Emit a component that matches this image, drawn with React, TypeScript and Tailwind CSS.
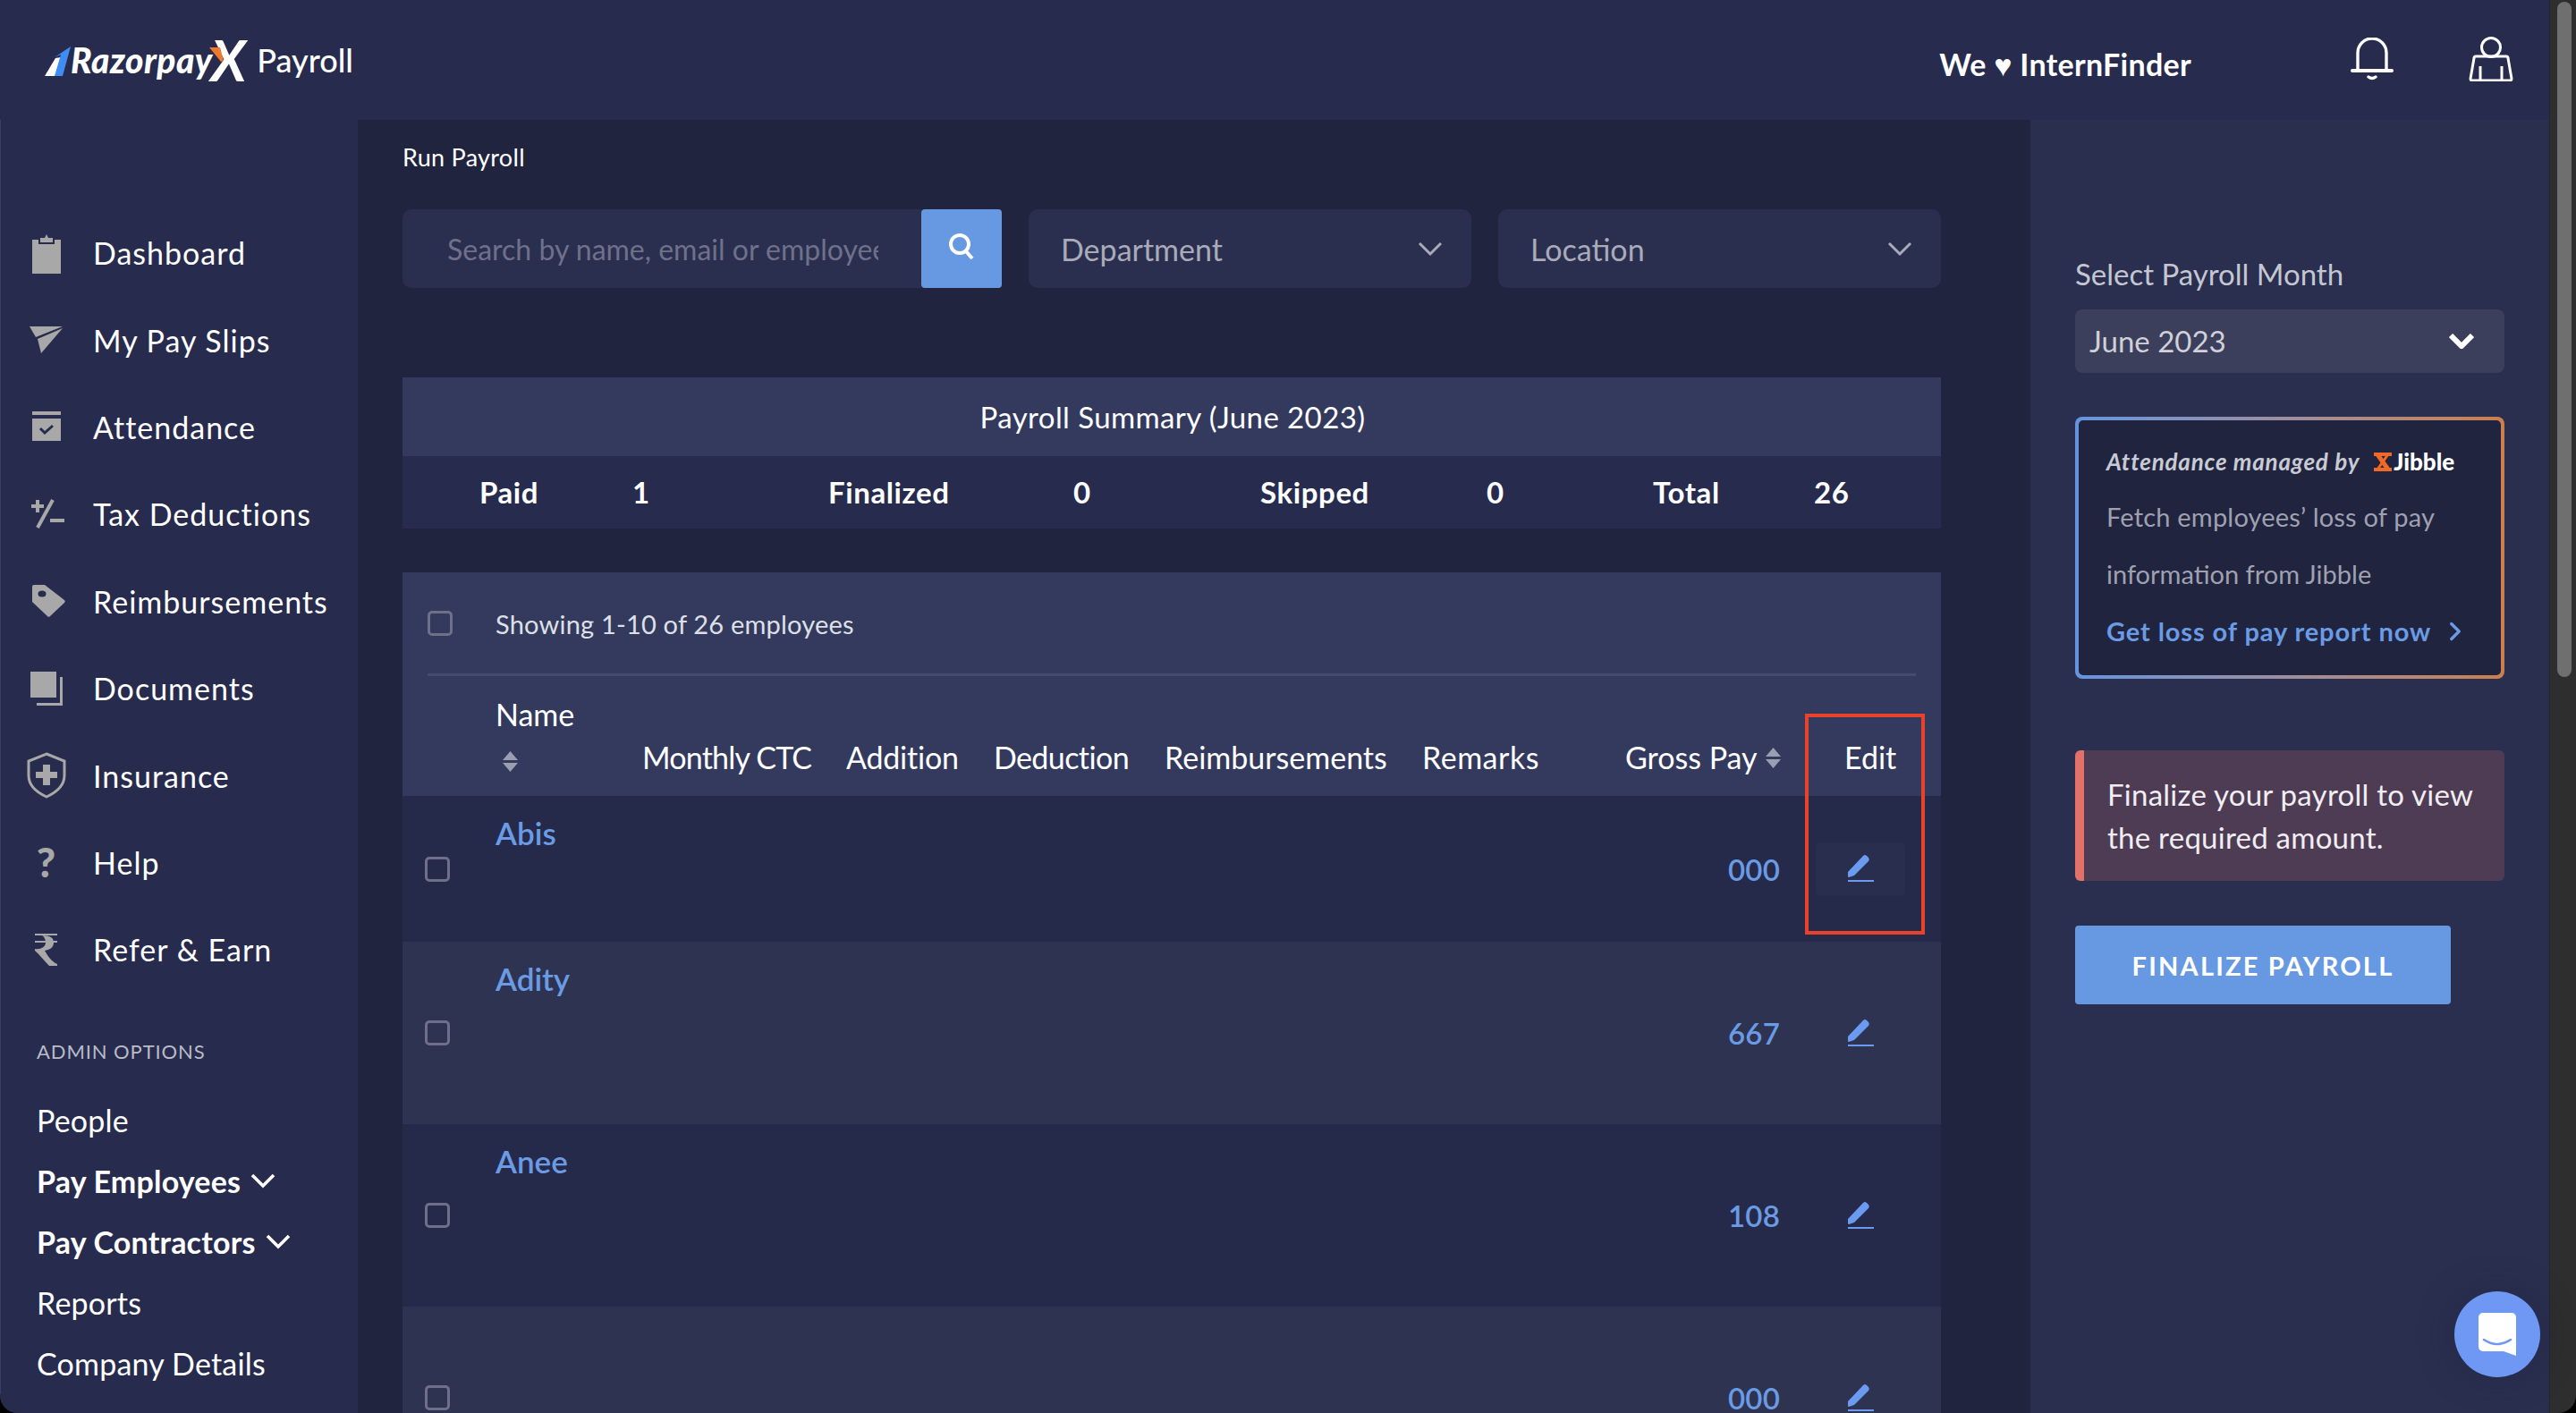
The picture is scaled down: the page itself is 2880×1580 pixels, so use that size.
import { ChevronRight } from "lucide-react";
import type { ReactNode } from "react";

const navItems: { label: string; icon: ReactNode }[] = [
  {
    label: "Dashboard",
    icon: (
      <svg width="44" height="46" viewBox="0 0 44 46" fill="#a8a8a8">
        <path d="M6 8h7v5h18V8h7v38H6z" />
        <path d="M15 11V6h5l2-4 2 4h5v5z" />
      </svg>
    ),
  },
  {
    label: "My Pay Slips",
    icon: (
      <svg width="38" height="31" viewBox="0 0 38 31" fill="#a8a8a8">
        <path d="M0 0h37L7 12z" />
        <path d="M37 2 9 14l4 16z" />
      </svg>
    ),
  },
  {
    label: "Attendance",
    icon: (
      <svg width="44" height="36" viewBox="0 0 44 36" fill="#a8a8a8">
        <path d="M6 1h32v4H6z" />
        <path d="M6 9h32v25H6z" />
        <path d="M15 20l5 5 9-8" fill="none" stroke="#272b4d" strokeWidth="3" />
      </svg>
    ),
  },
  {
    label: "Tax Deductions",
    icon: (
      <svg width="44" height="36" viewBox="0 0 44 36" fill="none" stroke="#a8a8a8" strokeWidth="4">
        <path d="M5 9h14M12 2v14M29 2 12 33M26 25h16" />
      </svg>
    ),
  },
  {
    label: "Reimbursements",
    icon: (
      <svg width="44" height="38" viewBox="0 0 44 38">
        <path fill="#a8a8a8" d="M6 3a2 2 0 0 1 2-2h12l22 17a2 2 0 0 1 0 3L26 36a2 2 0 0 1-3 0L6 20z" />
        <ellipse cx="17" cy="11" rx="4.5" ry="3.5" fill="#272b4d" />
      </svg>
    ),
  },
  {
    label: "Documents",
    icon: (
      <svg width="44" height="40" viewBox="0 0 44 40" fill="#a8a8a8">
        <path d="M4 1h29v29H4z" />
        <path d="M37 7h3v32H11v-3h26z" />
      </svg>
    ),
  },
  {
    label: "Insurance",
    icon: (
      <svg width="46" height="52" viewBox="0 0 46 52">
        <path d="M23 2 43 10v16c0 11-9 19-20 24C12 45 3 37 3 26V10z" fill="none" stroke="#a8a8a8" strokeWidth="3" />
        <path d="M19 14h8v8h8v7h-8v8h-8v-8h-8v-7h8z" fill="#a8a8a8" />
      </svg>
    ),
  },
  {
    label: "Help",
    icon: <span className="text-[46px] leading-none font-black text-[#a8a8a8]">?</span>,
  },
  {
    label: "Refer & Earn",
    icon: (
      <svg width="25" height="36" viewBox="0 0 25 36" fill="#a8a8a8">
        <path d="M0 0h25v2H0zM0 8h25v2H0z" />
        <path d="M8 2c10 0 13 3 13 8 0 6-5 8-10 9 3 5 7 12 14 15v2h-9C10 30 6 24 0 19v-2c6 1 12-2 12-7 0-4-2-7-4-8z" />
      </svg>
    ),
  },
];

const rows = [
  { name: "Abis", amount: "000", h: "h-[163px]", bg: "bg-[#262a4a]", box: true },
  { name: "Adity", amount: "667", h: "h-[204px]", bg: "bg-[#2f3352]", box: false },
  { name: "Anee", amount: "108", h: "h-[204px]", bg: "bg-[#262a4a]", box: false },
  { name: "", amount: "000", h: "h-[204px]", bg: "bg-[#2f3352]", box: false },
];

function SortIcon() {
  return (
    <svg width="17" height="23" viewBox="0 0 17 23" fill="#9a9eb0">
      <path d="M8.5 0 17 10H0z" />
      <path d="M0 13h17l-8.500 10z" />
    </svg>
  );
}

function Chevron({ color, sw }: { color: string; sw: number }) {
  return (
    <svg width="28" height="17" viewBox="0 0 28 17" fill="none" stroke={color} strokeWidth={sw}>
      <path d="M2 2l12 12L26 2" />
    </svg>
  );
}

function Checkbox() {
  return <div className="w-[28px] h-[28px] rounded-[5px] border-[3px] border-[#6d7088]" />;
}

function PencilIcon() {
  return (
    <svg width="30" height="31" viewBox="0 0 30 31" fill="#6a9bf0" className="-mt-[2px]">
      <path d="M1 20 18 2a3 3 0 0 1 4 0l2 2a3 3 0 0 1 0 4L8 24l-6 2a1 1 0 0 1-1-1z" />
      <path d="M1 29h29v2H1z" />
    </svg>
  );
}

function Sidebar() {
  return (
    <aside className="w-[400px] shrink-0 border-l border-[#3a3e5c] bg-[#272b4d] text-white">
      <nav className="pt-[100px]">
        {navItems.map((item) => (
          <div key={item.label} className="flex h-[97.4px] items-center">
            <div className="flex w-[103px] justify-center pr-[2px]">{item.icon}</div>
            <span className="text-[34px] font-normal tracking-[1px]">{item.label}</span>
          </div>
        ))}
      </nav>
      <div className="mt-[44px] pl-[40px]">
        <div className="h-[40px] text-[22px] leading-[42px] tracking-[0.9px] text-[#b9bbc8]">ADMIN OPTIONS</div>
        <div className="mt-[24px] flex flex-col text-[34px] leading-[68px] tracking-[0.2px]">
          <span>People</span>
          <span className="flex items-center gap-[11px] font-bold">
            Pay Employees <Chevron color="#fff" sw={3.6} />
          </span>
          <span className="flex items-center gap-[11px] font-bold">
            Pay Contractors <Chevron color="#fff" sw={3.6} />
          </span>
          <span>Reports</span>
          <span>Company Details</span>
        </div>
      </div>
    </aside>
  );
}

function Logo() {
  return (
    <div className="flex items-center">
      <svg width="30" height="34" viewBox="0 0 30 34" className="mt-[3px]">
        <path d="M0 33 12 13l6-1-6 21z" fill="#fff" />
        <path d="M11 33 18 9 11 12 29 0l-9 33z" fill="#3f8cf5" />
      </svg>
      <span className="ml-[-1px] text-[39px] font-black tracking-[0.4px] text-white italic">Razorpay</span>
      <span className="relative ml-[-2px] text-[63px] leading-[46px] font-bold text-white italic">
        X
        <svg width="16" height="16" viewBox="0 0 16 16" className="absolute top-[9px] left-[-2px]">
          <path d="M0 0h12l4 15-3 1z" fill="#ee7a2e" />
        </svg>
      </span>
      <span className="ml-[12px] text-[36px] font-medium text-white">Payroll</span>
    </div>
  );
}

function Filters() {
  return (
    <div className="flex gap-[30px]">
      <div className="flex">
        <div className="flex h-[88px] w-[580px] items-center rounded-l-[10px] bg-[#2a2f50] pr-[48px] pl-[50px]">
          <span className="min-w-0 overflow-hidden pt-[2px] text-[32px] whitespace-nowrap text-[#6e7189]">Search by name, email or employee ID</span>
        </div>
        <div className="flex h-[88px] w-[90px] items-center justify-center rounded-[4px] bg-[#6798e2]">
          <svg width="30" height="30" viewBox="0 0 30 30" fill="none" stroke="#fff" strokeWidth="4" className="-mt-[4px]">
            <circle cx="13" cy="12" r="10" />
            <path d="m20 20 7 8" />
          </svg>
        </div>
      </div>
      {["Department", "Location"].map((label) => (
        <div key={label} className="flex h-[88px] w-[495px] items-center justify-between rounded-[10px] bg-[#2a2f50] pr-[32px] pl-[36px] text-[34px] text-[#a9abb8]">
          {label}
          <Chevron color="#a9abb8" sw={3} />
        </div>
      ))}
    </div>
  );
}

function Summary() {
  const stats = [
    { w: "w-[171px]", text: "Paid" },
    { w: "w-[219px]", text: "1" },
    { w: "w-[274px]", text: "Finalized" },
    { w: "w-[209px]", text: "0" },
    { w: "w-[253px]", text: "Skipped" },
    { w: "w-[186px]", text: "0" },
    { w: "w-[180px]", text: "Total" },
    { w: "w-[100px]", text: "26" },
  ];
  return (
    <div className="mt-[100px]">
      <div className="flex h-[88px] items-center justify-center bg-[#333a5e] pt-[2px] pl-[2px] text-[33px] tracking-[0.4px] text-white">Payroll Summary (June 2023)</div>
      <div className="flex h-[81px] items-center bg-[#272b4d] pl-[86px] text-[33px] font-bold tracking-[0.6px] text-white">
        {stats.map((s, i) => (
          <span key={i} className={s.w}>
            {s.text}
          </span>
        ))}
      </div>
    </div>
  );
}

function EmployeeTable() {
  const cols = [
    { label: "Monthly CTC", cls: "tracking-[-0.8px]" },
    { label: "Addition", cls: "tracking-[-0.2px]" },
    { label: "Deduction", cls: "tracking-[-0.6px]" },
    { label: "Reimbursements", cls: "" },
    { label: "Remarks", cls: "tracking-[0.5px]" },
  ];
  return (
    <div className="mt-[49px]">
      <div className="bg-[#333a5e] px-[28px]">
        <div className="flex h-[116px] items-center border-b-[3px] border-[#454b6d]">
          <Checkbox />
          <span className="ml-[48px] pt-[2px] text-[29px] tracking-[0.2px] text-[#dfe0e7]">Showing 1-10 of 26 employees</span>
        </div>
        <div className="-ml-[28px] grid h-[134px] grid-cols-[164px_228px_165px_191px_288px_227px_245px_108px] items-end pb-[23px] pl-[104px] text-[34px] leading-[40px] text-white">
          <div className="mb-[4px] flex flex-col gap-[21px]">
            <span>Name</span>
            <div className="pl-[8px]">
              <SortIcon />
            </div>
          </div>
          {cols.map((c) => (
            <span key={c.label} className={c.cls}>
              {c.label}
            </span>
          ))}
          <span className="flex items-center gap-[9px]">
            Gross Pay <SortIcon />
          </span>
          <span>Edit</span>
        </div>
      </div>
      {rows.map((row) => (
        <div key={row.amount + row.name} className={`flex items-center ${row.h} ${row.bg}`}>
          <div className="w-[104px] pl-[25px]">
            <Checkbox />
          </div>
          <div className="flex-1 self-start pt-[21px] text-[35px] leading-[40px] font-semibold text-[#6a9be4]">{row.name}</div>
          <div className="pt-[2px] text-[33px] font-semibold tracking-[0.2px] text-[#6a9be4]">{row.amount}</div>
          <div className="w-[180px] pl-[40px]">
            <div className={`flex h-[60px] w-[100px] items-center justify-center rounded-[6px] ${row.box ? "bg-[#2a2e4e]" : ""}`}>
              <PencilIcon />
            </div>
          </div>
        </div>
      ))}
    </div>
  );
}

function RightPanel() {
  return (
    <aside className="w-[580px] shrink-0 bg-[#2a2f50] px-[50px] pt-[152px]">
      <div className="h-[40px] text-[33px] leading-[40px] text-[#c4c6d2]">Select Payroll Month</div>
      <div className="mt-[20px] flex h-[71px] w-[480px] items-center justify-between rounded-[8px] bg-[#3b3f5c] pr-[34px] pl-[16px] text-[33px] text-[#cfd0d8]">
        June 2023
        <Chevron color="#fff" sw={6} />
      </div>
      <div className="mt-[49px] h-[293px] w-[480px] rounded-[8px] bg-gradient-to-r from-[#6494e0] to-[#cb7f4c] p-[4px]">
        <div className="flex h-full flex-col rounded-[5px] bg-[#20243f] pt-[24px] pl-[31px]">
          <div className="flex h-[44px] items-center">
            <span className="text-[26px] font-bold tracking-[0.8px] text-[#c8cad4] italic">Attendance managed by</span>
            <svg width="20" height="21" viewBox="0 0 20 21" fill="none" stroke="#f06a26" className="ml-[16px]">
              <path d="M0 2h20M0 19h20" strokeWidth="4" />
              <path d="M4 2l12 17" strokeWidth="5" />
              <path d="M16 2 4 19" strokeWidth="3" />
            </svg>
            <span className="ml-[2px] text-[26px] font-black text-white">Jibble</span>
          </div>
          <span className="mt-[18px] text-[29px] leading-[44px] tracking-[0.2px] text-[#9fa1b0]">Fetch employees’ loss of pay</span>
          <span className="mt-[20px] text-[29px] leading-[44px] text-[#9fa1b0]">information from Jibble</span>
          <span className="mt-[20px] flex items-center text-[29px] leading-[44px] font-bold tracking-[0.9px] text-[#6a9be4]">
            Get loss of pay report now
            <ChevronRight size={34} strokeWidth={2.4} className="ml-[10px]" />
          </span>
        </div>
      </div>
      <div className="mt-[80px] flex h-[146px] w-[480px] overflow-hidden rounded-[6px] bg-[#4e3c55]">
        <div className="w-[10px] bg-[#e2716a]" />
        <div className="pt-[25px] pl-[26px] text-[33px] leading-[48px] tracking-[0.25px] text-[#f0eef2]">
          Finalize your payroll to view
          <br />
          the required amount.
        </div>
      </div>
      <div className="mt-[50px] flex h-[88px] w-[420px] items-center justify-center rounded-[4px] bg-[#6798e2] pt-[2px] text-[29px] font-bold tracking-[2.2px] text-white">
        FINALIZE PAYROLL
      </div>
    </aside>
  );
}

export default function App() {
  return (
    <div className="h-[1580px] w-[2880px] overflow-hidden bg-black font-[Lato,sans-serif]">
      <div className="relative flex h-full overflow-hidden rounded-b-[20px] bg-[#2e2e2e]">
        <div className="relative flex w-[2850px] shrink-0 flex-col bg-[#272b4d]">
          <div className="flex h-[134px] shrink-0 items-center justify-between pr-[40px]">
            <div className="pl-[50px]">
              <Logo />
            </div>
            <div className="flex items-center">
              <span className="pt-[8px] text-[34px] font-bold tracking-[0.3px] text-white">We ♥ InternFinder</span>
              <svg width="48" height="48" viewBox="0 0 48 48" fill="none" stroke="#fff" strokeWidth="3.4" strokeLinecap="round" className="mt-[-2px] ml-[178px]">
                <path d="M8 36V17a16 16 0 0 1 32 0v19" />
                <path d="M2 37h44" strokeWidth="4" />
                <path d="M20 44q4 3 8 0" />
              </svg>
              <svg width="50" height="50" viewBox="0 0 50 50" fill="none" stroke="#fff" strokeWidth="3" strokeLinejoin="round" className="mt-[-2px] ml-[84px]">
                <circle cx="25" cy="12" r="10.5" />
                <path d="M8 22h34q2 0 2 2l4 23q0 2-2 2H4q-2 0-2-2l4-23q0-2 2-2z" />
                <path d="M13 33v16M37 33v16" />
              </svg>
            </div>
          </div>
          <div className="flex min-h-0 flex-1">
            <div className="-mt-[134px] h-[1580px]">
              <div className="h-[134px]" />
              <Sidebar />
            </div>
            <main className="w-[1870px] shrink-0 bg-[#20243f] pt-[20px] pr-[100px] pl-[50px]">
              <div className="h-[44px] text-[27px] leading-[44px] tracking-[0.3px] text-white">Run Payroll</div>
              <div className="mt-[36px]">
                <Filters />
              </div>
              <Summary />
              <EmployeeTable />
            </main>
            <RightPanel />
          </div>
          <div className="pointer-events-none absolute top-[798px] left-[2018px] h-[247px] w-[134px] border-[4px] border-[#e8432a]" />
          <div className="absolute top-[1444px] left-[2744px] flex h-[96px] w-[96px] items-center justify-center rounded-full bg-[#6f98f5] shadow-[0_0_40px_rgba(30,30,60,0.4)]">
            <svg width="42" height="48" viewBox="0 0 42 48">
              <path d="M5 0h32a5 5 0 0 1 5 5v43l-14-5H5a5 5 0 0 1-5-5V5a5 5 0 0 1 5-5z" fill="#fff" />
              <path d="M6 30q15 10 30 0" fill="none" stroke="#6f98f5" strokeWidth="2.6" strokeLinecap="round" />
            </svg>
          </div>
        </div>
        <div className="h-full w-[30px] shrink-0 border-l border-[#262626] pt-[2px] pl-[8px]">
          <div className="h-[755px] w-[16px] rounded-full bg-[#6f6f6f]" />
        </div>
      </div>
    </div>
  );
}
